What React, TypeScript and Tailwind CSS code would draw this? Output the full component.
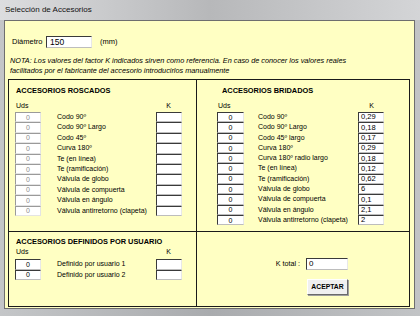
import React from "react";

const roscados = [
  "Codo 90º",
  "Codo 90º Largo",
  "Codo 45º",
  "Curva 180º",
  "Te (en línea)",
  "Te (ramificación)",
  "Válvula de globo",
  "Válvula de compuerta",
  "Válvula en ángulo",
  "Válvula antirretorno (clapeta)",
];

const bridados: [string, string][] = [
  ["Codo 90º", "0,29"],
  ["Codo 90º Largo", "0,18"],
  ["Codo 45º largo", "0,17"],
  ["Curva 180º", "0,29"],
  ["Curva 180º radio largo", "0,18"],
  ["Te (en línea)", "0,12"],
  ["Te (ramificación)", "0,62"],
  ["Válvula de globo", "6"],
  ["Válvula de compuerta", "0,1"],
  ["Válvula en ángulo", "2,1"],
  ["Válvula antirretorno (clapeta)", "2"],
];

// sunken edit box, greyed when disabled
function Edit({ value = "", disabled = false, center = false, className = "" }: { value?: string; disabled?: boolean; center?: boolean; className?: string }) {
  return (
    <div
      className={
        "bg-white border-[1px] leading-none flex items-center px-[2px] " +
        (disabled
          ? "border-t-[#9a9a9a] border-l-[#9a9a9a] border-b-[#e4e4e4] border-r-[#e4e4e4] text-[#8a8a8a] "
          : "border-t-[#3a3a3a] border-l-[#3a3a3a] border-b-[#bdbdbd] border-r-[#e8e8e8] text-black ") +
        (center ? "justify-center " : "") +
        className
      }
    >
      {value}
    </div>
  );
}

export default function App() {
  return (
    <div className="w-[420px] h-[316px] overflow-hidden bg-gradient-to-r from-[#c4c6c8] via-[#a9abae] to-[#c2c4c6] font-['Liberation_Sans',Arial,sans-serif] text-black">
      {/* title bar */}
      <div className="h-[20px] flex items-center pl-[5px] bg-gradient-to-r from-[#dcdddf] via-[#b7b8ba] to-[#d4d5d7] text-[8px] text-[#111]">
        Selección de Accesorios
      </div>

      {/* client area */}
      <div className="ml-[4px] mr-[5px] h-[289px] border border-[#6e6e6e] bg-[#ffffc3] flex flex-col">
        <div className="flex items-center h-[12px] mt-[15px] pl-[7px] text-[7.5px]">
          <span className="w-[34px]">Diámetro</span>
          <Edit value="150" className="w-[46px] h-[12px] text-[8.5px] pl-[3px]" />
          <span className="ml-[8px]">(mm)</span>
        </div>

        <div className="mt-[8px] pl-[5px] pr-[4px] text-[7.3px] italic leading-[10px]">
          NOTA: Los valores del factor K indicados sirven como referencia. En caso de conocer los valores reales
          <br />
          facilitados por el fabricante del accesorio introducirlos manualmente
        </div>

        {/* panels */}
        <div className="ml-[3px] mr-[4px] mt-[3px] h-[228px] border border-[#1a1a1a] flex flex-col">
          <div className="h-[152px] flex border-b border-[#1a1a1a]">
            {/* roscados */}
            <div className="w-[188px] border-r border-[#1a1a1a] pl-[6px] pt-[6px]">
              <div className="pl-[1px] font-bold text-[7.4px] leading-[10px]">ACCESORIOS ROSCADOS</div>
              <div className="w-[167px] flex justify-between items-end h-[14px] pb-[1px] text-[7px] leading-none">
                <span className="pl-[1px]">Uds</span>
                <span className="pr-[11px]">K</span>
              </div>
              <div className="w-[167px] flex flex-col mt-[2px]">
                {roscados.map((r) => (
                  <div key={r} className="h-[10.4px] grid grid-cols-[26px_1fr_26px] items-stretch text-[7px]">
                    <Edit value="0" disabled center />
                    <span className="pl-[16px] leading-[10.4px] whitespace-nowrap">{r}</span>
                    <Edit />
                  </div>
                ))}
              </div>
            </div>

            {/* bridados */}
            <div className="flex-1 pl-[20px] pt-[6px]">
              <div className="pl-[5px] font-bold text-[7.4px] leading-[10px]">ACCESORIOS BRIDADOS</div>
              <div className="w-[167px] flex justify-between items-end h-[14px] pb-[1px] text-[7px] leading-none">
                <span className="pl-[1px]">Uds</span>
                <span className="pr-[10px]">K</span>
              </div>
              <div className="w-[167px] flex flex-col mt-[2px]">
                {bridados.map(([r, k]) => (
                  <div key={r} className="h-[10.3px] grid grid-cols-[27px_1fr_26px] items-stretch text-[7px]">
                    <Edit value="0" center />
                    <span className="pl-[14px] leading-[10.3px] whitespace-nowrap">{r}</span>
                    <Edit value={k} className="text-[7.6px]" />
                  </div>
                ))}
              </div>
            </div>
          </div>

          <div className="flex-1 flex">
            {/* definidos por usuario */}
            <div className="w-[188px] border-r border-[#1a1a1a] pl-[6px] pt-[5px]">
              <div className="pl-[1px] font-bold text-[7.4px] leading-[10px]">ACCESORIOS DEFINIDOS POR USUARIO</div>
              <div className="w-[167px] flex justify-between items-end h-[8px] text-[7px] leading-none">
                <span className="pl-[1px]">Uds</span>
                <span className="pr-[11px]">K</span>
              </div>
              <div className="w-[167px] flex flex-col mt-[4px]">
                {["Definido por usuario 1", "Definido por usuario 2"].map((r) => (
                  <div key={r} className="h-[10.5px] grid grid-cols-[26px_1fr_26px] items-stretch text-[7px]">
                    <Edit value="0" center />
                    <span className="pl-[16px] leading-[10.5px] whitespace-nowrap">{r}</span>
                    <Edit />
                  </div>
                ))}
              </div>
            </div>

            {/* total */}
            <div className="flex-1 flex flex-col items-end pr-[61px] pt-[26px]">
              <div className="flex items-center h-[12px]">
                <span className="text-[7.2px] mr-[6px]">K total :</span>
                <Edit value="0" className="w-[42px] h-[12px] text-[8px]" />
              </div>
              <button className="mt-[9px] ml-[1px] w-[41px] h-[16px] bg-[#f0f0f0] border border-t-white border-l-white border-b-[#6a6a6a] border-r-[#6a6a6a] shadow-[1px_1px_0_#a0a0a0] font-bold text-[6.8px] flex items-center justify-center">
                ACEPTAR
              </button>
            </div>
          </div>
        </div>
      </div>
    </div>
  );
}
